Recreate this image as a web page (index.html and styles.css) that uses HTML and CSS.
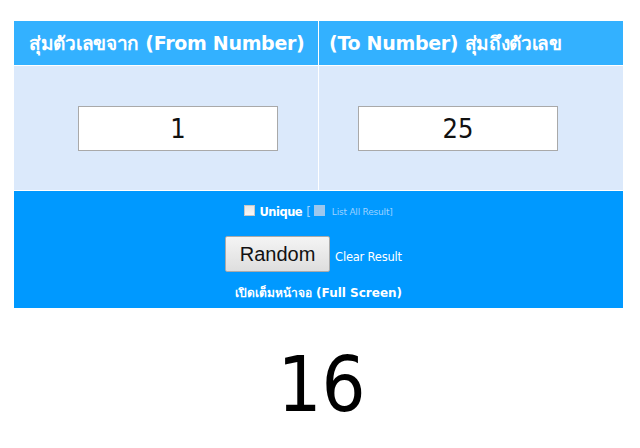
FILE: index.html
```html
<!DOCTYPE html>
<html>
<head>
<meta charset="utf-8">
<link rel="stylesheet" href="styles.css">
</head>
<body>
<div class="panel">
  <div class="grid">
    <div class="head head-left">สุ่มตัวเลขจาก (From Number)</div>
    <div class="head head-right">(To Number) สุ่มถึงตัวเลข</div>
    <div class="cell cell-left"><input class="num" type="text" value="1"></div>
    <div class="cell cell-right"><input class="num" type="text" value="25"></div>
  </div>
  <div class="bar">
    <div class="opts">
      <input type="checkbox" class="chk"><span class="unique">Unique</span>
      <span class="dim">[</span>
      <input type="checkbox" class="chk chk-dis" disabled>
      <span class="dim small">List All Result]</span>
    </div>
    <div class="actions">
      <button class="btn">Random</button>
      <span class="clear">Clear Result</span>
    </div>
    <div class="full">เปิดเต็มหน้าจอ (Full Screen)</div>
  </div>
</div>
<div class="result">16</div>
</body>
</html>
```
FILE: styles.css
```css
html, body { margin: 0; padding: 0; background: #fff; }
body { font-family: "DejaVu Sans", "Noto Sans", sans-serif; }
.panel { width: 609px; margin: 21px 0 0 14px; }
.grid {
  display: grid;
  grid-template-columns: 304px 304px;
  column-gap: 1px;
  row-gap: 1px;
  background: #fff;
}
.head {
  height: 44px;
  background: #33b1ff;
  color: #fff;
  font-weight: bold;
  font-size: 19px;
  display: flex;
  align-items: center;
  white-space: nowrap;
  letter-spacing: -0.3px;
}
.head-left { padding-left: 15px; }
.head-right { padding-left: 10px; }
.cell {
  height: 124px;
  background: #dbe9fb;
  display: flex;
  align-items: center;
}
.cell-left { justify-content: flex-end; padding-right: 40px; }
.cell-right { justify-content: flex-start; padding-left: 39px; }
.num {
  box-sizing: border-box;
  width: 200px;
  height: 45px;
  border: 1px solid #a9a9a9;
  background: #fff;
  text-align: center;
  font-family: "DejaVu Sans Condensed", "DejaVu Sans", sans-serif;
  font-size: 27px;
  color: #111;
  padding: 0;
  margin: 0;
}
.bar {
  margin-top: 1px;
  height: 117px;
  background: #0099ff;
  color: #fff;
  display: flex;
  flex-direction: column;
  align-items: center;
  font-size: 12px;
}
.opts {
  display: flex;
  align-items: center;
  margin-top: 13px;
  height: 16px;
}
.chk {
  appearance: none;
  -webkit-appearance: none;
  width: 11px;
  height: 11px;
  margin: 0 4px 3px 0;
  border: 1px solid #c8c8c8;
  background: linear-gradient(#e8e8e8, #f6f6f6);
  box-sizing: border-box;
}
.chk-dis { background: #9cc8ee; border-color: #9cc8ee; margin: 0 7px 3px 3px; }
.unique { font-weight: bold; font-size: 11.5px; letter-spacing: -0.5px; }
.dim { color: #9dd2ff; margin-left: 4px; }
.small { font-size: 9px; margin-left: 0; letter-spacing: -0.2px; }
.actions {
  display: flex;
  align-items: baseline;
  margin-top: 16px;
  padding-right: 10px;
}
.btn {
  width: 105px;
  height: 36px;
  font-family: "Liberation Sans", Arial, sans-serif;
  font-size: 20px;
  color: #111;
  background: linear-gradient(#f4f4f4, #dedede);
  border: 1px solid #aaa;
  border-radius: 2px;
  padding: 0;
}
.clear { margin-left: 5px; font-size: 11.5px; letter-spacing: -0.2px; }
.full { margin-top: 11px; font-weight: bold; font-size: 12px; }
.result {
  text-align: center;
  font-family: "DejaVu Sans Condensed", "DejaVu Sans", sans-serif;
  font-size: 77px;
  line-height: 1;
  margin-top: 38px;
  padding-left: 3px;
  color: #000;
}
```
